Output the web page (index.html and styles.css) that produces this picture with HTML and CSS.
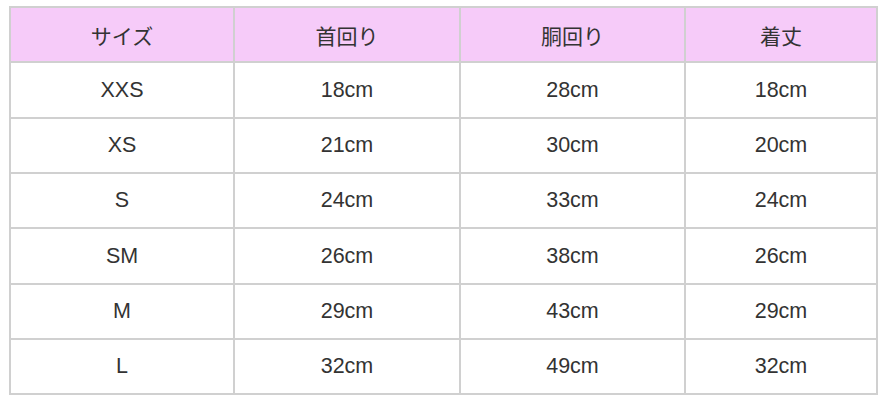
FILE: index.html
```html
<!DOCTYPE html>
<html lang="ja">
<head>
<meta charset="utf-8">
<link rel="stylesheet" href="styles.css">
</head>
<body>
<table class="size-table">
  <thead>
    <tr>
      <th class="c1">サイズ</th>
      <th class="c2">首回り</th>
      <th class="c3">胴回り</th>
      <th class="c4">着丈</th>
    </tr>
  </thead>
  <tbody>
    <tr><td>XXS</td><td>18cm</td><td>28cm</td><td>18cm</td></tr>
    <tr><td>XS</td><td>21cm</td><td>30cm</td><td>20cm</td></tr>
    <tr><td>S</td><td>24cm</td><td>33cm</td><td>24cm</td></tr>
    <tr><td>SM</td><td>26cm</td><td>38cm</td><td>26cm</td></tr>
    <tr><td>M</td><td>29cm</td><td>43cm</td><td>29cm</td></tr>
    <tr><td>L</td><td>32cm</td><td>49cm</td><td>32cm</td></tr>
  </tbody>
</table>
</body>
</html>
```

FILE: styles.css
```css
html, body {
  margin: 0;
  padding: 0;
  background: #ffffff;
}

body {
  padding: 6px 0 0 9px;
  font-family: "Liberation Sans", "Noto Sans CJK JP", sans-serif;
  color: #333333;
}

.size-table {
  border-collapse: collapse;
  table-layout: fixed;
  width: 869px;
}

.size-table th,
.size-table td {
  border: 2px solid #d0d0d0;
  text-align: center;
  vertical-align: middle;
  padding: 0;
  font-size: 21.5px;
  font-weight: normal;
  height: 53.35px;
}

.size-table th {
  background: #f6cbf9;
  font-family: "Noto Sans CJK JP", sans-serif;
  font-size: 21px;
}

.c1 { width: 222px; }
.c2 { width: 224px; }
.c3 { width: 223px; }
.c4 { width: 190px; }
```
